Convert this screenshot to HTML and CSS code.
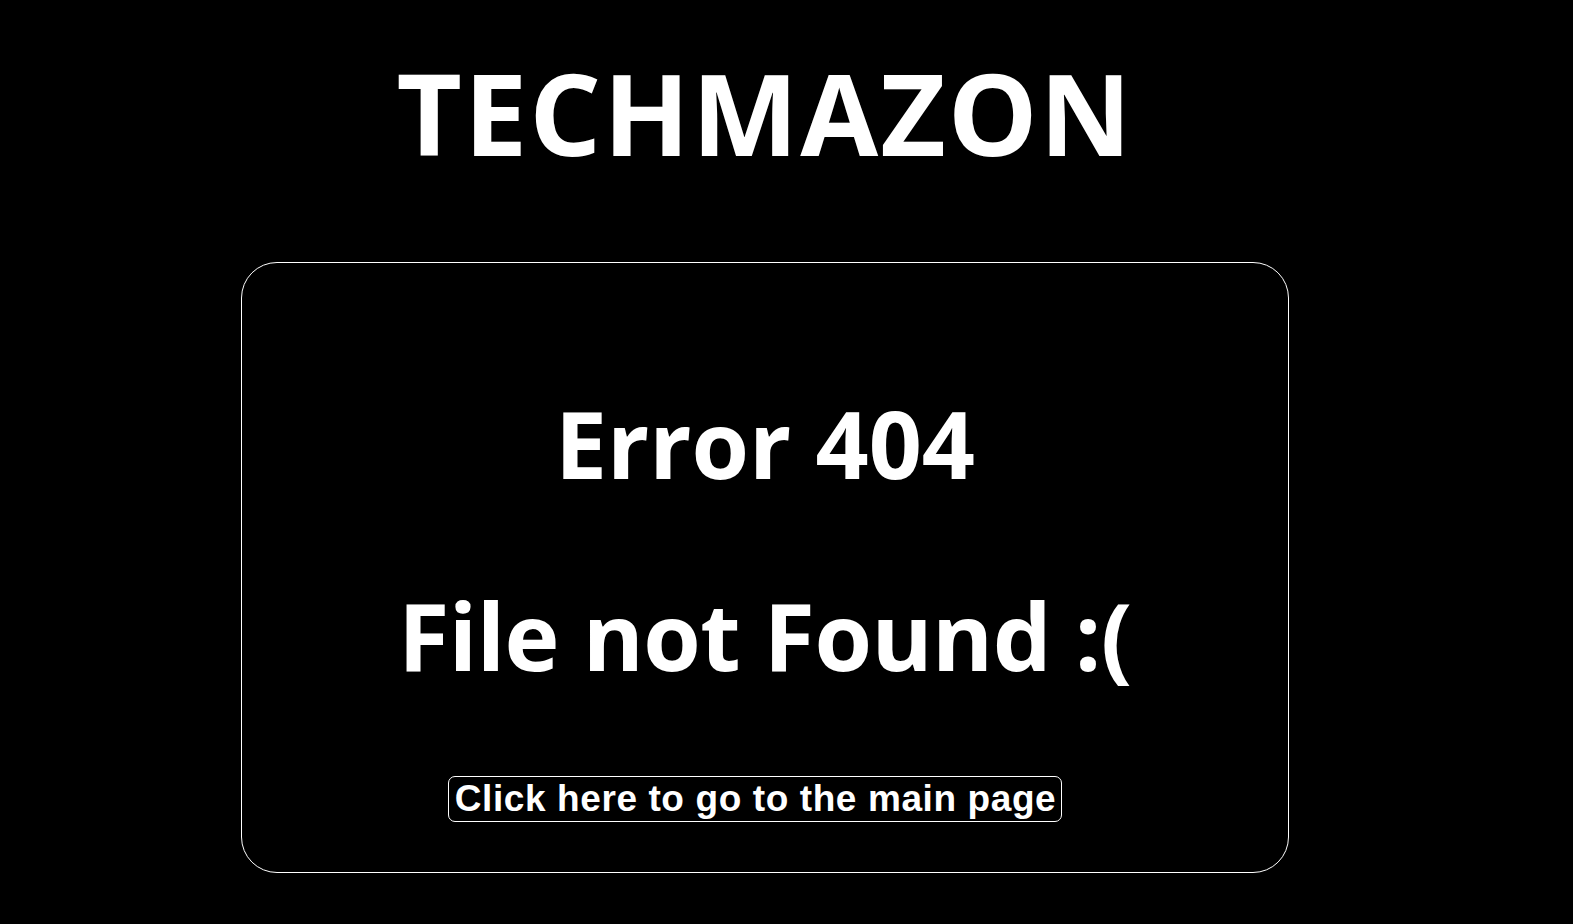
FILE: index.html
```html
<!DOCTYPE html>
<html lang="en">
<head>
<meta charset="utf-8">
<title>Techmazon - Error 404</title>
<link rel="stylesheet" href="styles.css">
</head>
<body>
<div class="page">
  <h1 class="brand">TECHMAZON</h1>
  <div class="card">
    <h2 class="err">Error 404</h2>
    <h2 class="msg">File not Found :(</h2>
    <div class="btn-row">
      <a class="btn" href="#">Click here to go to the main page</a>
    </div>
  </div>
</div>
</body>
</html>
```

FILE: styles.css
```css
html, body {
  margin: 0;
  padding: 0;
  background: #000;
  color: #fff;
}
.page {
  width: 1530px;
  display: flex;
  flex-direction: column;
  align-items: center;
  font-family: "Open Sans", "Noto Sans", sans-serif;
}
.brand {
  margin: 56px 0 0 0;
  font-size: 113px;
  line-height: 1;
  font-weight: 700;
  letter-spacing: 2px;
}
.card {
  margin-top: 93px;
  width: 1046px;
  border: 1px solid #fff;
  border-radius: 36px;
  padding: 134px 0 50px 0;
  display: flex;
  flex-direction: column;
  align-items: center;
}
.err, .msg {
  margin: 0;
  font-size: 93px;
  line-height: 1;
  font-weight: 700;
}
.msg {
  margin-top: 99px;
  letter-spacing: -0.5px;
}
.btn-row {
  margin-top: 94px;
  display: flex;
  justify-content: center;
  padding-right: 20px;
}
.btn {
  display: block;
  font-family: "Liberation Sans", Arial, sans-serif;
  font-weight: 700;
  font-size: 37px;
  line-height: 40px;
  letter-spacing: 0.6px;
  padding: 2px 5px 2px 6px;
  border: 1px solid #fff;
  border-radius: 7px;
  color: #fff;
  text-decoration: none;
}
```
